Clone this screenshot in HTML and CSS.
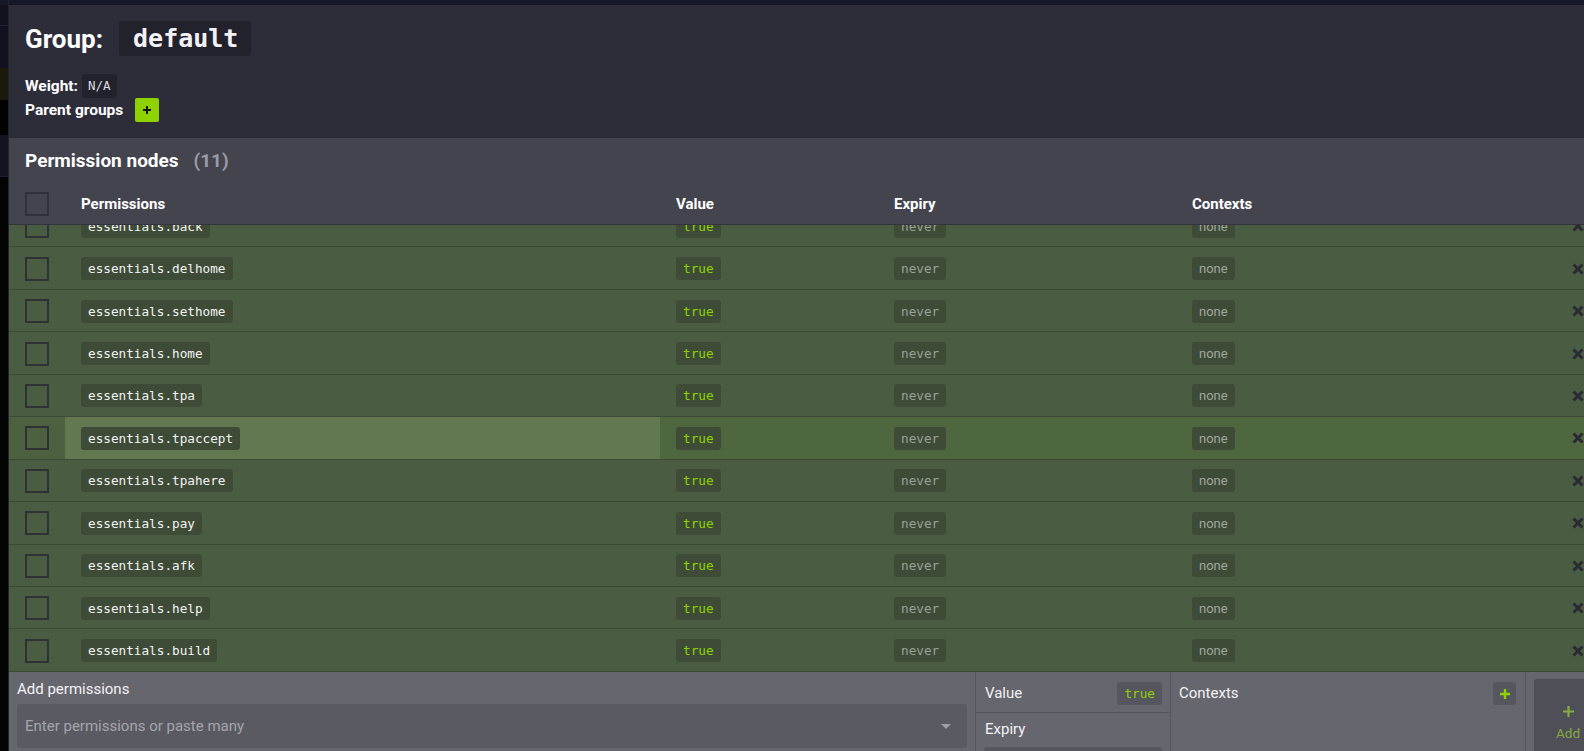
FILE: index.html
```html
<!DOCTYPE html>
<html lang="en">
<head>
<meta charset="utf-8">
<title>Group: default</title>
<link rel="stylesheet" href="styles.css">
</head>
<body>
<div class="app">
  <aside class="rail">
    <div class="seg s-top"></div>
    <div class="seg s-navy1"></div>
    <div class="seg s-navy2"></div>
    <div class="seg s-olive"></div>
    <div class="seg s-black"></div>
    <div class="seg s-navy3"></div>
    <div class="seg s-rest"></div>
  </aside>
  <main class="main">
    <div class="topstrip"></div>
    <section class="group-head">
      <div class="group-title">
        <h1>Group:</h1>
        <span class="code-lg">default</span>
      </div>
      <div class="meta">
        <div class="meta-row">Weight: <span class="weight-val">N/A</span></div>
        <div class="meta-row">Parent groups
          <span class="add-parent"><svg width="10" height="10" viewBox="0 0 10 10"><path d="M5 1v8M1 5h8" stroke="#141414" stroke-width="2"/></svg></span>
        </div>
      </div>
    </section>
    <section class="perms">
      <div class="perms-title">Permission nodes <span class="count">(11)</span></div>
      <div class="grid thead">
        <div class="cell"><span class="checkbox"></span></div>
        <div class="cell">Permissions</div>
        <div class="cell">Value</div>
        <div class="cell">Expiry</div>
        <div class="cell">Contexts</div>
        <div class="cell"></div>
      </div>
      <div class="tbody">
        <div class="tbody-inner">
          <div class="grid row"><div class="cell"><span class="checkbox"></span></div><div class="cell"><span class="badge perm">essentials.back</span></div><div class="cell"><span class="badge val">true</span></div><div class="cell"><span class="badge exp">never</span></div><div class="cell"><span class="badge ctx">none</span></div><div class="cell x"><svg width="12" height="12" viewBox="0 0 12 12"><path d="M1.5 1.5l9 9M10.5 1.5l-9 9" stroke="#2a2a35" stroke-width="3"/></svg></div></div>
          <div class="grid row"><div class="cell"><span class="checkbox"></span></div><div class="cell"><span class="badge perm">essentials.delhome</span></div><div class="cell"><span class="badge val">true</span></div><div class="cell"><span class="badge exp">never</span></div><div class="cell"><span class="badge ctx">none</span></div><div class="cell x"><svg width="12" height="12" viewBox="0 0 12 12"><path d="M1.5 1.5l9 9M10.5 1.5l-9 9" stroke="#2a2a35" stroke-width="3"/></svg></div></div>
          <div class="grid row"><div class="cell"><span class="checkbox"></span></div><div class="cell"><span class="badge perm">essentials.sethome</span></div><div class="cell"><span class="badge val">true</span></div><div class="cell"><span class="badge exp">never</span></div><div class="cell"><span class="badge ctx">none</span></div><div class="cell x"><svg width="12" height="12" viewBox="0 0 12 12"><path d="M1.5 1.5l9 9M10.5 1.5l-9 9" stroke="#2a2a35" stroke-width="3"/></svg></div></div>
          <div class="grid row"><div class="cell"><span class="checkbox"></span></div><div class="cell"><span class="badge perm">essentials.home</span></div><div class="cell"><span class="badge val">true</span></div><div class="cell"><span class="badge exp">never</span></div><div class="cell"><span class="badge ctx">none</span></div><div class="cell x"><svg width="12" height="12" viewBox="0 0 12 12"><path d="M1.5 1.5l9 9M10.5 1.5l-9 9" stroke="#2a2a35" stroke-width="3"/></svg></div></div>
          <div class="grid row"><div class="cell"><span class="checkbox"></span></div><div class="cell"><span class="badge perm">essentials.tpa</span></div><div class="cell"><span class="badge val">true</span></div><div class="cell"><span class="badge exp">never</span></div><div class="cell"><span class="badge ctx">none</span></div><div class="cell x"><svg width="12" height="12" viewBox="0 0 12 12"><path d="M1.5 1.5l9 9M10.5 1.5l-9 9" stroke="#2a2a35" stroke-width="3"/></svg></div></div>
          <div class="grid row row-hover"><div class="cell c-check"><span class="checkbox"></span></div><div class="cell c-perm"><span class="badge perm">essentials.tpaccept</span></div><div class="cell"><span class="badge val">true</span></div><div class="cell"><span class="badge exp">never</span></div><div class="cell"><span class="badge ctx">none</span></div><div class="cell x"><svg width="12" height="12" viewBox="0 0 12 12"><path d="M1.5 1.5l9 9M10.5 1.5l-9 9" stroke="#2a2a35" stroke-width="3"/></svg></div></div>
          <div class="grid row"><div class="cell"><span class="checkbox"></span></div><div class="cell"><span class="badge perm">essentials.tpahere</span></div><div class="cell"><span class="badge val">true</span></div><div class="cell"><span class="badge exp">never</span></div><div class="cell"><span class="badge ctx">none</span></div><div class="cell x"><svg width="12" height="12" viewBox="0 0 12 12"><path d="M1.5 1.5l9 9M10.5 1.5l-9 9" stroke="#2a2a35" stroke-width="3"/></svg></div></div>
          <div class="grid row"><div class="cell"><span class="checkbox"></span></div><div class="cell"><span class="badge perm">essentials.pay</span></div><div class="cell"><span class="badge val">true</span></div><div class="cell"><span class="badge exp">never</span></div><div class="cell"><span class="badge ctx">none</span></div><div class="cell x"><svg width="12" height="12" viewBox="0 0 12 12"><path d="M1.5 1.5l9 9M10.5 1.5l-9 9" stroke="#2a2a35" stroke-width="3"/></svg></div></div>
          <div class="grid row"><div class="cell"><span class="checkbox"></span></div><div class="cell"><span class="badge perm">essentials.afk</span></div><div class="cell"><span class="badge val">true</span></div><div class="cell"><span class="badge exp">never</span></div><div class="cell"><span class="badge ctx">none</span></div><div class="cell x"><svg width="12" height="12" viewBox="0 0 12 12"><path d="M1.5 1.5l9 9M10.5 1.5l-9 9" stroke="#2a2a35" stroke-width="3"/></svg></div></div>
          <div class="grid row"><div class="cell"><span class="checkbox"></span></div><div class="cell"><span class="badge perm">essentials.help</span></div><div class="cell"><span class="badge val">true</span></div><div class="cell"><span class="badge exp">never</span></div><div class="cell"><span class="badge ctx">none</span></div><div class="cell x"><svg width="12" height="12" viewBox="0 0 12 12"><path d="M1.5 1.5l9 9M10.5 1.5l-9 9" stroke="#2a2a35" stroke-width="3"/></svg></div></div>
          <div class="grid row"><div class="cell"><span class="checkbox"></span></div><div class="cell"><span class="badge perm">essentials.build</span></div><div class="cell"><span class="badge val">true</span></div><div class="cell"><span class="badge exp">never</span></div><div class="cell"><span class="badge ctx">none</span></div><div class="cell x"><svg width="12" height="12" viewBox="0 0 12 12"><path d="M1.5 1.5l9 9M10.5 1.5l-9 9" stroke="#2a2a35" stroke-width="3"/></svg></div></div>
        </div>
      </div>
    </section>
    <section class="add-panel">
      <div class="add-left">
        <div class="add-label">Add permissions</div>
        <div class="select">
          <input class="select-input" type="text" placeholder="Enter permissions or paste many">
          <span class="caret"></span>
        </div>
      </div>
      <div class="add-value">
        <div class="av-row"><span>Value</span><span class="badge val dark">true</span></div>
        <div class="ex-row">Expiry</div>
        <div class="ex-input"></div>
      </div>
      <div class="add-ctx">
        <span>Contexts</span>
        <span class="ctx-plus"><svg width="12" height="12" viewBox="0 0 12 12"><path d="M6 1v10M1 6h10" stroke="#8ed300" stroke-width="2.4"/></svg></span>
      </div>
      <div class="add-btn-col">
        <div class="add-btn">
          <svg width="13" height="13" viewBox="0 0 13 13"><path d="M6.5 1v11M1 6.5h11" stroke="#86ad3e" stroke-width="2.2"/></svg>
          <span>Add</span>
        </div>
      </div>
    </section>
  </main>
</div>
</body>
</html>
```

FILE: styles.css
```css
html, body {
  margin: 0;
  padding: 0;
}

body {
  width: 1584px;
  height: 751px;
  overflow: hidden;
  background: #000;
  font-family: Roboto, "Noto Sans", sans-serif;
  color: #fff;
}

.app {
  display: flex;
  height: 751px;
}

/* left rail */
.rail {
  width: 8px;
  flex: none;
  display: flex;
  flex-direction: column;
  border-right: 1px solid #24242c;
}
.seg { flex: none; }
.s-top { height: 5px; background: #17172a; }
.s-navy1 { height: 20px; background: #12121f; border-bottom: 1px solid #22223a; }
.s-navy2 { height: 42px; background: #111120; }
.s-olive { height: 32px; background: #1a1a0b; }
.s-black { height: 35px; background: #020202; }
.s-navy3 { height: 41px; background: #121222; border-bottom: 1px solid #1e1e30; }
.s-rest { flex: 1; background: #040404; }

.main {
  flex: 1;
  min-width: 0;
  display: flex;
  flex-direction: column;
  overflow: hidden;
}

.topstrip {
  height: 5px;
  flex: none;
  background: #17172a;
}

/* group header */
.group-head {
  flex: none;
  height: 132.5px;
  box-sizing: border-box;
  padding: 16px 16px 0;
  background: #2d2d3a;
}

.group-title {
  display: flex;
  align-items: center;
  gap: 16px;
  height: 35px;
}

.group-title h1 {
  margin: 0;
  font-size: 26px;
  font-weight: 700;
  color: #fff;
}

.code-lg {
  font-family: "DejaVu Sans Mono", monospace;
  font-weight: 700;
  font-size: 25px;
  height: 35px;
  line-height: 35px;
  padding: 0 13px 0 14px;
  background: #22222c;
  border-radius: 3px;
  color: #f2f2f6;
}

.meta {
  margin-top: 18px;
  display: flex;
  flex-direction: column;
}

.meta-row {
  display: flex;
  align-items: center;
  height: 24px;
  font-size: 15.5px;
  font-weight: 700;
  color: #fff;
}

.weight-val {
  margin-left: 4px;
  height: 24px;
  line-height: 24px;
  padding: 0 6px;
  font-family: "DejaVu Sans Mono", monospace;
  font-size: 12.5px;
  font-weight: 400;
  background: #22222c;
  border-radius: 3px;
  color: #dcdce2;
}

.add-parent {
  margin-left: 12px;
  width: 24px;
  height: 24px;
  background: #8ed300;
  border-radius: 2px;
  display: flex;
  align-items: center;
  justify-content: center;
}

/* permissions */
.perms {
  flex: 1;
  min-height: 0;
  display: flex;
  flex-direction: column;
  background: #44444f;
}

.perms-title {
  flex: none;
  height: 45.5px;
  box-sizing: border-box;
  padding: 1px 16px 0;
  display: flex;
  align-items: center;
  font-size: 19px;
  font-weight: 700;
  color: #fff;
}

.count {
  margin-left: 15px;
  color: #9b9ba4;
}

.grid {
  display: grid;
  grid-template-columns: 56px 595px 218px 298px 1fr 24px;
  align-items: stretch;
}

.cell {
  display: flex;
  align-items: center;
  padding-left: 16px;
  box-sizing: border-box;
  min-width: 0;
}

.thead {
  flex: none;
  height: 42px;
  box-sizing: border-box;
  border-bottom: 1px solid #34343e;
  font-size: 15px;
  font-weight: 700;
  color: #fff;
  position: relative;
  z-index: 1;
}

.checkbox {
  width: 24px;
  height: 24px;
  box-sizing: border-box;
  border: 2px solid #30313a;
  display: block;
}

.tbody {
  flex: 1;
  min-height: 0;
  overflow: hidden;
}

.tbody-inner {
  margin-top: -20px;
}

.row {
  height: 42.45px;
  box-sizing: border-box;
  background: #4a5d42;
  border-bottom: 1px solid #3c4a36;
}

.row .cell {
  padding-top: 1px;
}
.row .x {
  padding-top: 1px;
}

.row .checkbox {
  border-color: #2f3234;
}

.row-hover {
  background: #4f673e;
}
.row-hover .c-check { background: #4d6040; }
.row-hover .c-perm { background: #617851; }

.badge {
  display: inline-block;
  height: 23px;
  line-height: 23px;
  padding: 0 7px;
  border-radius: 3px;
  background: #3e4c37;
  font-family: "DejaVu Sans Mono", monospace;
  font-size: 12.7px;
  white-space: nowrap;
}

.perm { color: #f2f2f2; }
.val { color: #8ed300; }
.exp { color: #9aa196; }
.ctx {
  font-family: Roboto, "Noto Sans", sans-serif;
  font-size: 13px;
  color: #a0a79c;
}

.x {
  padding-left: 0;
  justify-content: flex-end;
  padding-right: 0;
}

/* add panel */
.add-panel {
  flex: none;
  height: 79px;
  box-sizing: border-box;
  background: #66666f;
  display: grid;
  grid-template-columns: 966px 195px 355px 1fr;
  font-size: 15px;
  color: #f2f2f4;
  overflow: hidden;
}

.add-left {
  padding: 8px 8px 0;
}

.add-label {
  height: 18px;
  line-height: 18px;
}

.select {
  margin-top: 6px;
  height: 44px;
  display: flex;
  align-items: center;
  background: #5a5a63;
  border-radius: 3px;
  padding-right: 16px;
}

.select-input {
  flex: 1;
  min-width: 0;
  height: 100%;
  border: 0;
  outline: 0;
  background: transparent;
  padding: 0 8px;
  font-family: Roboto, "Noto Sans", sans-serif;
  font-size: 15px;
  color: #f2f2f4;
}

.select-input::placeholder {
  color: #a5a5ac;
}

.caret {
  width: 0;
  height: 0;
  border-left: 5px solid transparent;
  border-right: 5px solid transparent;
  border-top: 5px solid #9d9da4;
}

.add-value {
  border-left: 1px solid #55555e;
  display: flex;
  flex-direction: column;
}

.av-row {
  height: 41px;
  box-sizing: border-box;
  padding: 2px 8px 0 9px;
  display: flex;
  align-items: center;
  justify-content: space-between;
  border-bottom: 1px solid #55555e;
}

.badge.dark {
  background: #56565f;
}

.ex-row {
  height: 31px;
  padding-left: 9px;
  display: flex;
  align-items: center;
}

.ex-input {
  margin: 3px 8px 0 8px;
  height: 30px;
  background: #56565f;
  border-radius: 3px;
}

.add-ctx {
  border-left: 1px solid #55555e;
  padding: 10px 9px 0 8px;
  display: flex;
  align-items: flex-start;
  justify-content: space-between;
}

.add-ctx > span:first-child {
  height: 23px;
  line-height: 23px;
}

.ctx-plus {
  width: 23px;
  height: 23px;
  border-radius: 3px;
  background: #56565f;
  display: flex;
  align-items: center;
  justify-content: center;
}

.add-btn-col {
  border-left: 1px solid #55555e;
  padding: 7px 0 0 8px;
}

.add-btn {
  width: 68px;
  height: 90px;
  background: #4f4f58;
  border-radius: 3px;
  display: flex;
  flex-direction: column;
  align-items: center;
  padding-top: 26px;
  box-sizing: border-box;
  gap: 7px;
  color: #83a742;
  font-size: 13.5px;
}
```
